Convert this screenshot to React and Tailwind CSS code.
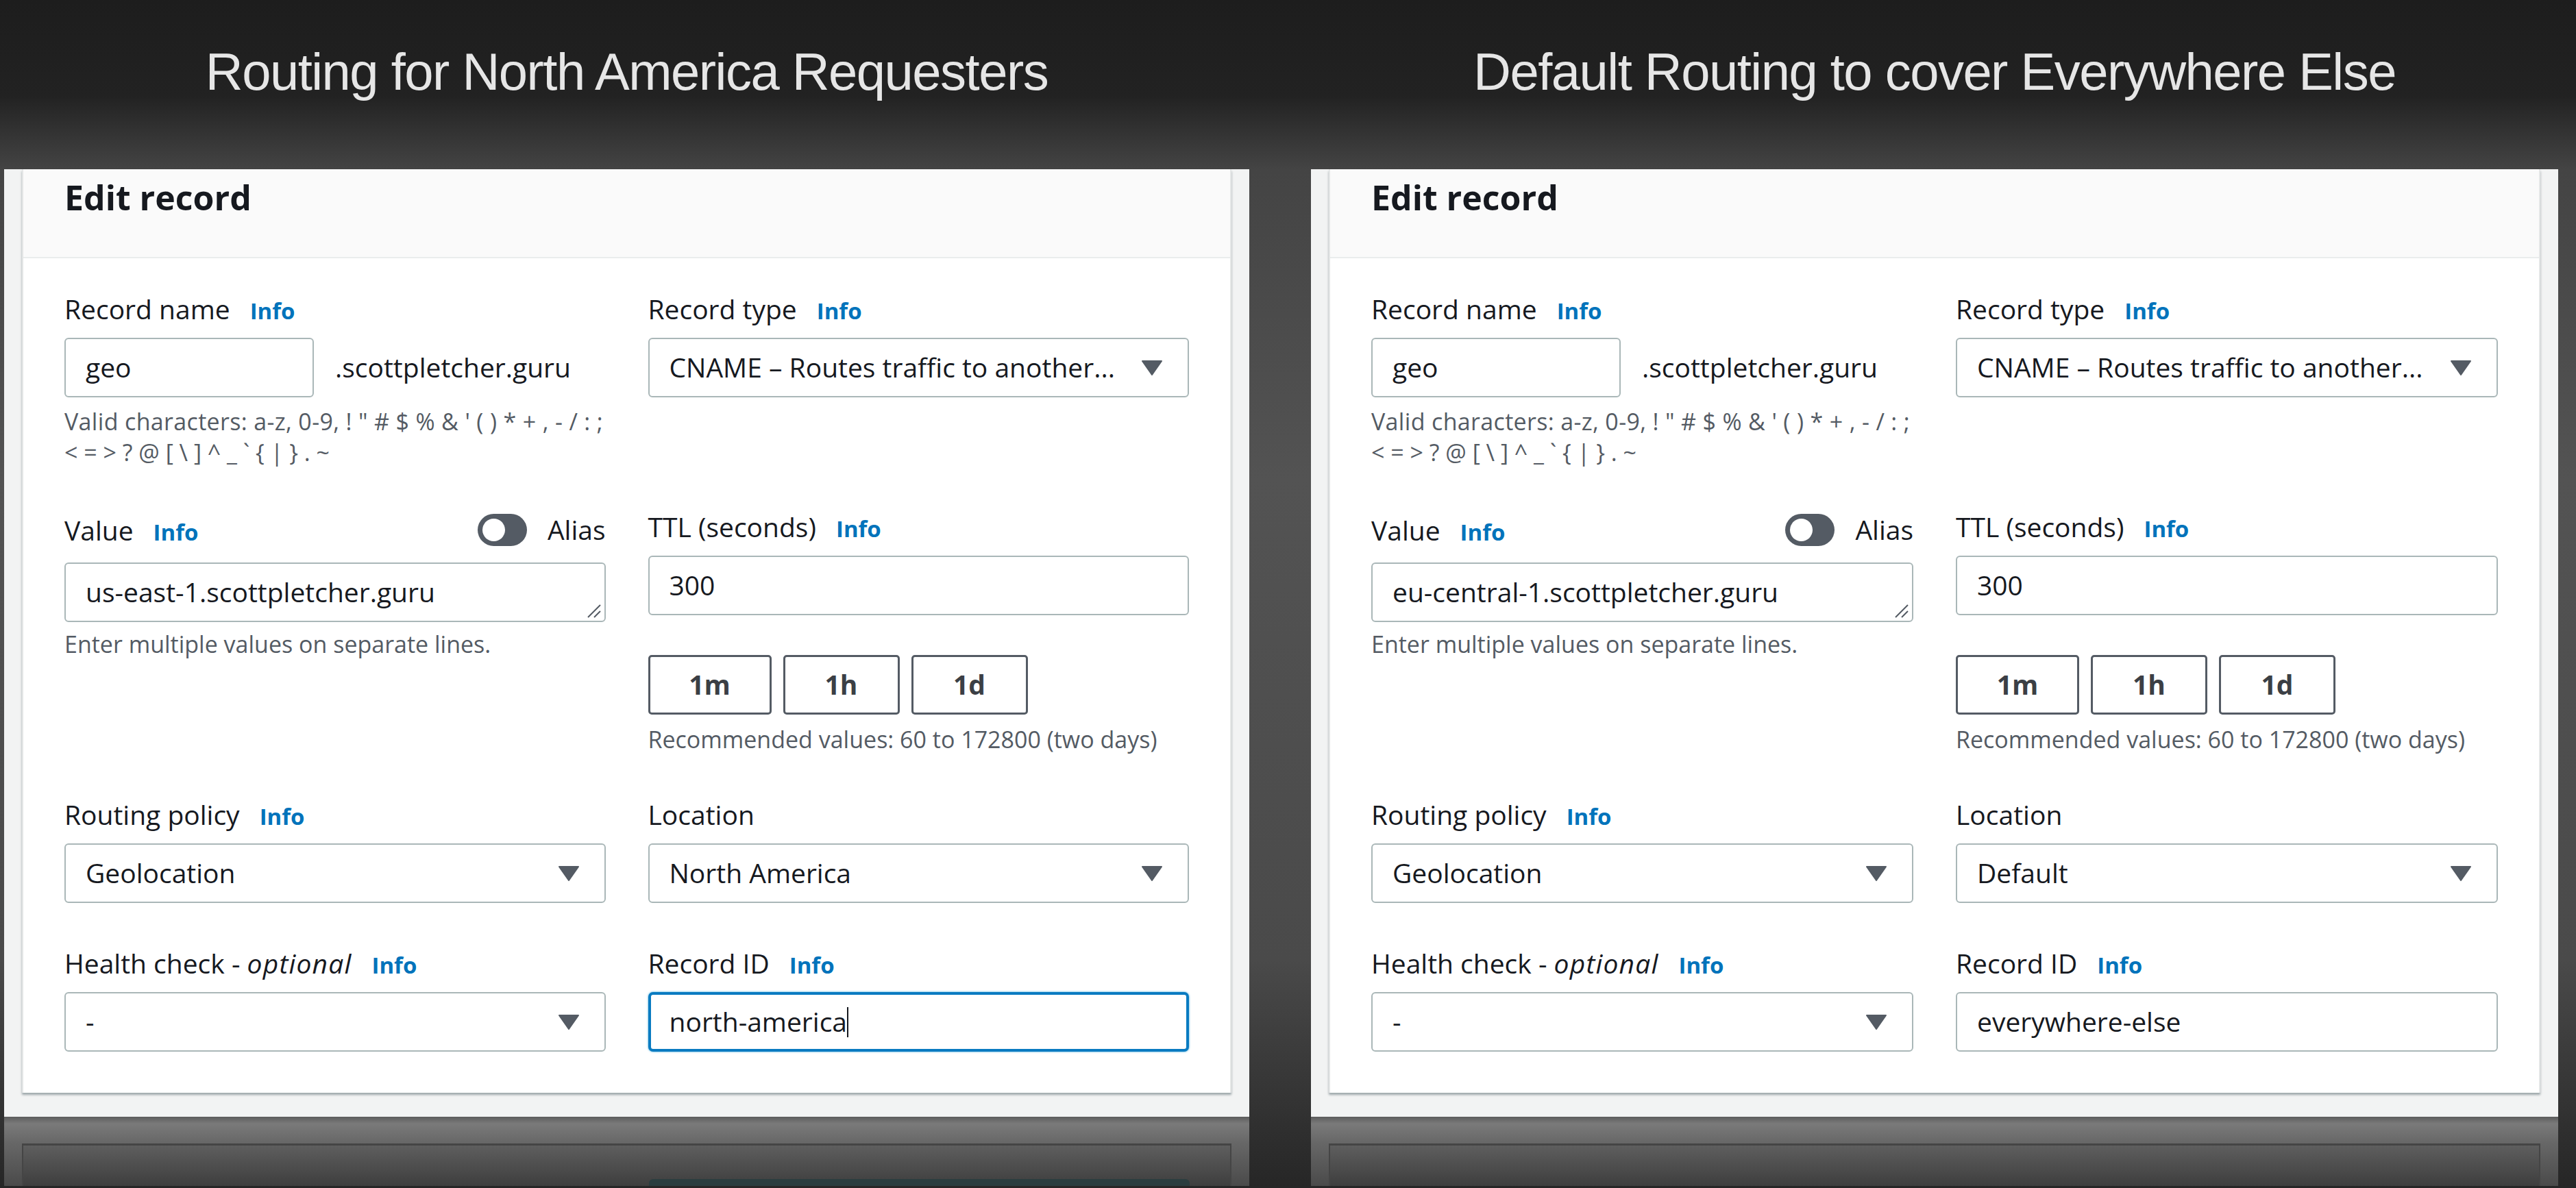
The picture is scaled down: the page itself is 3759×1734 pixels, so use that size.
import React from 'react'

const panels = [
  {
    title: 'Routing for North America Requesters',
    value: 'us-east-1.scottpletcher.guru',
    location: 'North America',
    recordId: 'north-america',
    focused: true,
  },
  {
    title: 'Default Routing to cover Everywhere Else',
    value: 'eu-central-1.scottpletcher.guru',
    location: 'Default',
    recordId: 'everywhere-else',
    focused: false,
  },
]

function Info() {
  return <span className="ml-[29px] text-[33px] font-bold text-[#0073bb]">Info</span>
}

function Label({ children, info = true }) {
  return (
    <div className="h-[49px] leading-[49px] text-[39px] text-[#16191f] whitespace-nowrap">
      {children}
      {info && <Info />}
    </div>
  )
}

function Arrow() {
  return (
    <svg width="30" height="22" viewBox="0 0 30 22" className="shrink-0">
      <path d="M1 1 H29 L15 21 Z" fill="#545b64" stroke="#545b64" strokeWidth="2" strokeLinejoin="round" />
    </svg>
  )
}

function Field({ children, select = false, className = '' }) {
  return (
    <div
      className={`h-[87px] bg-white border-2 border-[#aab7b8] rounded-[6px] flex items-center pl-[29px] pr-[37px] text-[39px] text-[#16191f] whitespace-nowrap ${className}`}
    >
      <span className="flex-1 overflow-hidden">{children}</span>
      {select && <Arrow />}
    </div>
  )
}

function Hint({ children }) {
  return <div className="text-[34px] leading-[45px] text-[#545b64] whitespace-nowrap">{children}</div>
}

function Toggle() {
  return (
    <div className="w-[72px] h-[47px] rounded-full bg-[#545b64] p-[7px] flex items-center">
      <div className="w-[33px] h-[33px] rounded-full bg-white" />
    </div>
  )
}

function Card({ p }) {
  return (
    <div className="bg-white border-x-2 border-[#e4e6e6] shadow-[0_3px_3px_0_rgba(0,28,36,0.35)] font-['Open_Sans',sans-serif]">
      <div className="h-[130px] bg-[#fafafa] border-b-2 border-[#eaeded] pt-[11px] pl-[60px]">
        <div className="text-[50px] leading-[60px] font-bold text-[#16191f]">Edit record</div>
      </div>

      <div className="px-[60px] pt-[49px] pb-[60px]">
        {/* name / type */}
        <div className="grid grid-cols-2 gap-x-[62px]">
          <div>
            <Label>Record name</Label>
            <div className="mt-[18px] flex items-center">
              <Field className="w-[364px]">geo</Field>
              <span className="ml-[31px] text-[39px] text-[#16191f]">.scottpletcher.guru</span>
            </div>
            <div className="mt-[13px]">
              <Hint>
                <span className="tracking-[0.01em]">{'Valid characters: a-z, 0-9, ! " # $ % & \' ( ) * + , - / : ;'}</span>
                <br />
                {'< = > ? @ [ \\ ] ^ _ ` { | } . ~'}
              </Hint>
            </div>
          </div>
          <div>
            <Label>Record type</Label>
            <Field select className="mt-[18px]">CNAME – Routes traffic to another...</Field>
          </div>
        </div>

        {/* value / ttl */}
        <div className="grid grid-cols-2 gap-x-[62px] mt-[61px]">
          <div>
            <div className="flex items-center justify-between">
              <Label>Value</Label>
              <div className="flex items-center">
                <Toggle />
                <span className="ml-[30px] text-[39px] text-[#16191f]">Alias</span>
              </div>
            </div>
            <div className="relative mt-[18px]">
              <Field className="h-[85px]">{p.value}</Field>
              <svg width="20" height="20" viewBox="0 0 20 20" className="absolute right-[7px] bottom-[6px]">
                <path d="M1 19 L19 1 M10 19 L19 10" stroke="#545b64" strokeWidth="2" />
              </svg>
            </div>
            <div className="mt-[10px]">
              <Hint>Enter multiple values on separate lines.</Hint>
            </div>
          </div>
          <div>
            <Label>TTL (seconds)</Label>
            <Field className="mt-[18px]">300</Field>
            <div className="mt-[58px] flex gap-x-[17px]">
              {['1m', '1h', '1d'].map((t, i) => (
                <div
                  key={t}
                  className={`${i === 0 ? 'w-[180px]' : 'w-[170px]'} h-[87px] border-[3px] border-[#545b64] rounded-[5px] flex items-center justify-center text-[39px] font-bold text-[#3b3f45]`}
                >
                  {t}
                </div>
              ))}
            </div>
            <div className="mt-[14px]">
              <Hint>Recommended values: 60 to 172800 (two days)</Hint>
            </div>
          </div>
        </div>

        {/* routing / location */}
        <div className="grid grid-cols-2 gap-x-[62px] mt-[62px]">
          <div>
            <Label>Routing policy</Label>
            <Field select className="mt-[18px]">Geolocation</Field>
          </div>
          <div>
            <Label info={false}>Location</Label>
            <Field select className="mt-[18px]">{p.location}</Field>
          </div>
        </div>

        {/* health / id */}
        <div className="grid grid-cols-2 gap-x-[62px] mt-[63px]">
          <div>
            <Label>
              Health check - <i className="tracking-[0.03em]">optional</i>
            </Label>
            <Field select className="mt-[18px]">-</Field>
          </div>
          <div>
            <Label>Record ID</Label>
            {p.focused ? (
              <div className="mt-[18px] h-[87px] bg-white border-[4px] border-[#0a7bc1] rounded-[7px] shadow-[0_0_3px_#39a6d8] flex items-center pl-[27px] text-[39px] text-[#16191f]">
                {p.recordId}
                <span className="w-[2px] h-[44px] bg-[#16191f]" />
              </div>
            ) : (
              <Field className="mt-[18px]">{p.recordId}</Field>
            )}
          </div>
        </div>
      </div>
    </div>
  )
}

function Column({ p, className = '' }) {
  return (
    <div className={`flex flex-col ${className}`}>
      <div className="h-[247px] pt-[67px] text-center font-['Liberation_Sans',Arial,sans-serif] text-[76px] leading-none tracking-[-0.02em] text-[#e6e6e6] whitespace-nowrap">
        {p.title}
      </div>
      <div className="bg-[#f2f3f3] px-[26px] pb-[35px]">
        <Card p={p} />
      </div>
      <div className="h-[101px] px-[26px] pt-[39px] bg-[linear-gradient(180deg,#5c5c5c_0px,#7a7a7a_10px,#676767_38px,#4a4a4a_100%)]">
        <div className="relative h-full border-t-[3px] border-x-2 border-[#454545] bg-[linear-gradient(180deg,#5e5e5e,#3e3e3e)]">
          {p.focused && (
            <div className="absolute left-[913px] right-[59px] bottom-0 h-[10px] rounded-t-[6px] bg-[#2a3d3f]" />
          )}
        </div>
      </div>
    </div>
  )
}

export default function App() {
  return (
    <div className="w-[3759px] h-[1734px] overflow-hidden flex pl-[6px] bg-[linear-gradient(180deg,#1d1d1d_0px,#222222_140px,#444444_247px,#535353_700px,#4a4a4a_1400px,#262626_1734px)]">
      <Column p={panels[0]} className="w-[1817px]" />
      <Column p={panels[1]} className="w-[1820px] ml-[90px]" />
    </div>
  )
}
